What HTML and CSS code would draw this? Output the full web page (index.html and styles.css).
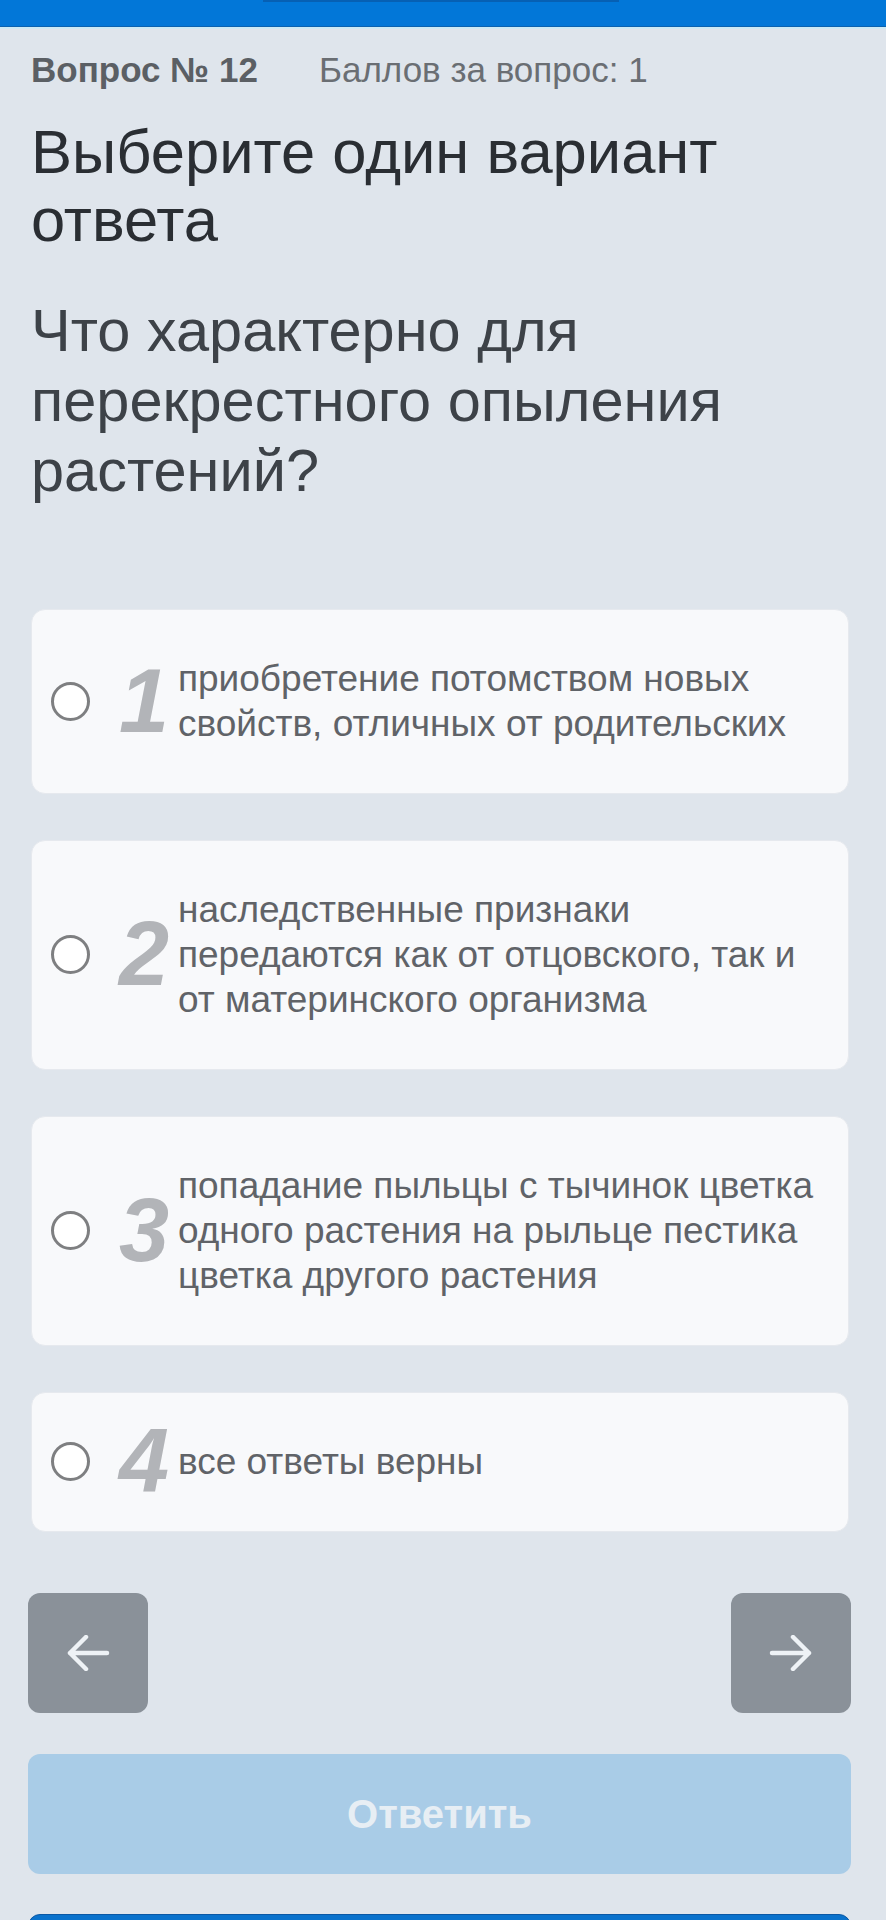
FILE: index.html
```html
<!DOCTYPE html>
<html lang="ru">
<head>
<meta charset="utf-8">
<title>Вопрос № 12</title>
<link rel="stylesheet" href="styles.css">
</head>
<body>
<header class="topbar"><div class="topbar-seg"></div></header>
<main class="page">
  <div class="meta">
    <span class="qnum">Вопрос № 12</span>
    <span class="points">Баллов за вопрос: 1</span>
  </div>
  <h1 class="title">Выберите один вариант ответа</h1>
  <p class="question">Что характерно для перекрестного опыления растений?</p>
  <ul class="answers">
    <li class="answer"><span class="radio"></span><span class="num">1</span><span class="text">приобретение потомством новых свойств, отличных от родительских</span></li>
    <li class="answer"><span class="radio"></span><span class="num">2</span><span class="text">наследственные признаки передаются как от отцовского, так и от материнского организма</span></li>
    <li class="answer"><span class="radio"></span><span class="num">3</span><span class="text">попадание пыльцы с тычинок цветка одного растения на рыльце пестика цветка другого растения</span></li>
    <li class="answer"><span class="radio"></span><span class="num">4</span><span class="text">все ответы верны</span></li>
  </ul>
  <div class="nav">
    <button class="nav-btn" aria-label="Назад">
      <svg width="44" height="36" viewBox="0 0 44 36"><path d="M41 18H4M20 2L4 18L20 34" fill="none" stroke="currentColor" stroke-width="4.5" stroke-linecap="round" stroke-linejoin="round"/></svg>
    </button>
    <button class="nav-btn" aria-label="Вперёд">
      <svg width="44" height="36" viewBox="0 0 44 36"><path d="M3 18H40M24 2L40 18L24 34" fill="none" stroke="currentColor" stroke-width="4.5" stroke-linecap="round" stroke-linejoin="round"/></svg>
    </button>
  </div>
  <button class="submit">Ответить</button>
  <div class="next-bar"></div>
</main>
</body>
</html>
```

FILE: styles.css
```css
* { box-sizing: border-box; }
html, body { margin: 0; padding: 0; }
body {
  background: #dfe5ec;
  font-family: "Liberation Sans", Arial, sans-serif;
  width: 886px;
  min-height: 1920px;
  overflow: hidden;
}
.topbar {
  height: 29px;
  background: linear-gradient(#0277d8 0 26px, #0a62b0 26px 27px, #cdeaf5 27px 29px);
  display: flex;
  justify-content: center;
}
.topbar-seg {
  width: 356px;
  height: 2px;
  background: #0660b4;
  margin-left: -4px;
}
.page {
  padding: 21px 35px 0 28px;
}
.meta {
  display: flex;
  gap: 61px;
  padding-left: 3px;
  font-size: 35px;
  line-height: 40px;
}
.qnum { font-weight: bold; color: #5b5f64; }
.points { color: #6a6e73; }
.title {
  margin: 28px 0 0 0;
  padding-left: 3px;
  font-weight: normal;
  font-size: 61.5px;
  line-height: 68px;
  color: #2a2e33;
}
.question {
  margin: 42px 0 0 0;
  padding-left: 3px;
  font-size: 59.5px;
  line-height: 70px;
  color: #3d4248;
}
.answers {
  list-style: none;
  margin: 103px 2px 0 3px;
  padding: 0;
  display: flex;
  flex-direction: column;
  gap: 46px;
}
.answer {
  display: flex;
  align-items: center;
  background: #f8f9fb;
  border: 1px solid #e6e9ee;
  border-radius: 14px;
  padding: 46px 20px 47px 19px;
}
.radio {
  flex: none;
  width: 39px;
  height: 39px;
  border-radius: 50%;
  border: 3px solid #7e7f81;
  background: #ffffff;
}
.num {
  flex: none;
  width: 82px;
  padding-right: 3px;
  text-align: right;
  font-size: 90px;
  line-height: 45px;
  font-weight: bold;
  font-style: italic;
  color: #b2b4b8;
}
.text {
  margin-left: 6px;
  font-size: 37px;
  line-height: 45px;
  color: #606368;
}
.nav {
  margin-top: 61px;
  display: flex;
  justify-content: space-between;
}
.nav-btn {
  width: 120px;
  height: 120px;
  border: none;
  border-radius: 12px;
  background: #8a9199;
  color: #eef2f6;
  display: flex;
  align-items: center;
  justify-content: center;
  padding: 0;
}
.submit {
  display: block;
  width: 100%;
  height: 120px;
  margin-top: 41px;
  border: none;
  border-radius: 12px;
  background: #a9cce7;
  color: #e7eef4;
  font-family: "Liberation Sans", Arial, sans-serif;
  font-weight: bold;
  font-size: 40px;
}
.next-bar {
  margin-top: 40px;
  height: 20px;
  border-radius: 12px 12px 0 0;
  background: #0a72cc;
  border: 1px solid #0b58a4;
}
```
